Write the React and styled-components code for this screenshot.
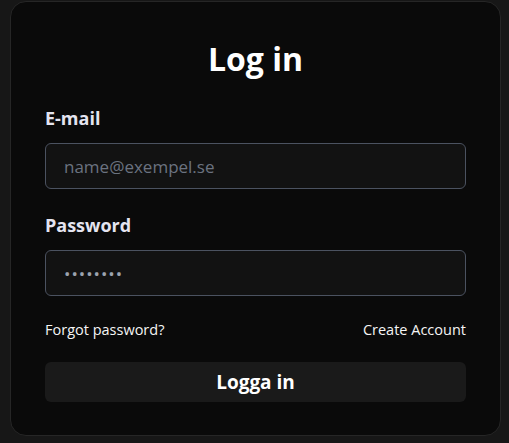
import React from 'react'
import styled, { createGlobalStyle } from 'styled-components'

const GlobalStyle = createGlobalStyle`
  html, body {
    margin: 0;
    padding: 0;
    background: #171717;
    font-family: "Open Sans", "Noto Sans", sans-serif;
  }
`

const Page = styled.div`
  padding: 1px 8px 0 10px;
`

const Card = styled.form`
  box-sizing: border-box;
  width: 491px;
  height: 435px;
  background: #0a0a0a;
  border: 1px solid #262626;
  border-radius: 16px;
  padding: 34px 34px 0;
  display: flex;
  flex-direction: column;
`

const Title = styled.h1`
  margin: 0 0 23px;
  text-align: center;
  color: #fff;
  font-size: 32px;
  font-weight: 700;
  line-height: 46px;
`

const Field = styled.div`
  display: flex;
  flex-direction: column;
  margin-bottom: ${p => p.$gap || 0}px;
`

const Label = styled.label`
  color: #e4e4f0;
  font-size: 18px;
  font-weight: 700;
  line-height: 26px;
  margin-bottom: 12px;
`

const Input = styled.input`
  box-sizing: border-box;
  height: 46px;
  width: 100%;
  background: #121212;
  border: 1px solid #4b5260;
  border-radius: 6px;
  padding: 0 18px;
  color: #9ca3af;
  font-family: inherit;
  font-size: 17px;
  outline: none;
  &::placeholder {
    color: #6b7280;
  }
  &[type='password'] {
    letter-spacing: 1px;
  }
`

const Links = styled.div`
  display: flex;
  justify-content: space-between;
  margin: 24px 0 22px;
`

const LinkText = styled.a`
  color: #f5f5f5;
  font-size: 14.5px;
  line-height: 20px;
  text-decoration: none;
`

const Submit = styled.button`
  height: 40px;
  width: 100%;
  border: none;
  border-radius: 6px;
  background: #1a1a1a;
  color: #fff;
  font-family: inherit;
  font-size: 19px;
  font-weight: 700;
`

export default function App() {
  return (
    <Page>
      <GlobalStyle />
      <Card onSubmit={e => e.preventDefault()}>
        <Title>Log in</Title>
        <Field $gap={23}>
          <Label>E-mail</Label>
          <Input type="email" placeholder="name@exempel.se" />
        </Field>
        <Field>
          <Label>Password</Label>
          <Input type="password" defaultValue="password" />
        </Field>
        <Links>
          <LinkText href="#">Forgot password?</LinkText>
          <LinkText href="#">Create Account</LinkText>
        </Links>
        <Submit type="submit">Logga in</Submit>
      </Card>
    </Page>
  )
}
